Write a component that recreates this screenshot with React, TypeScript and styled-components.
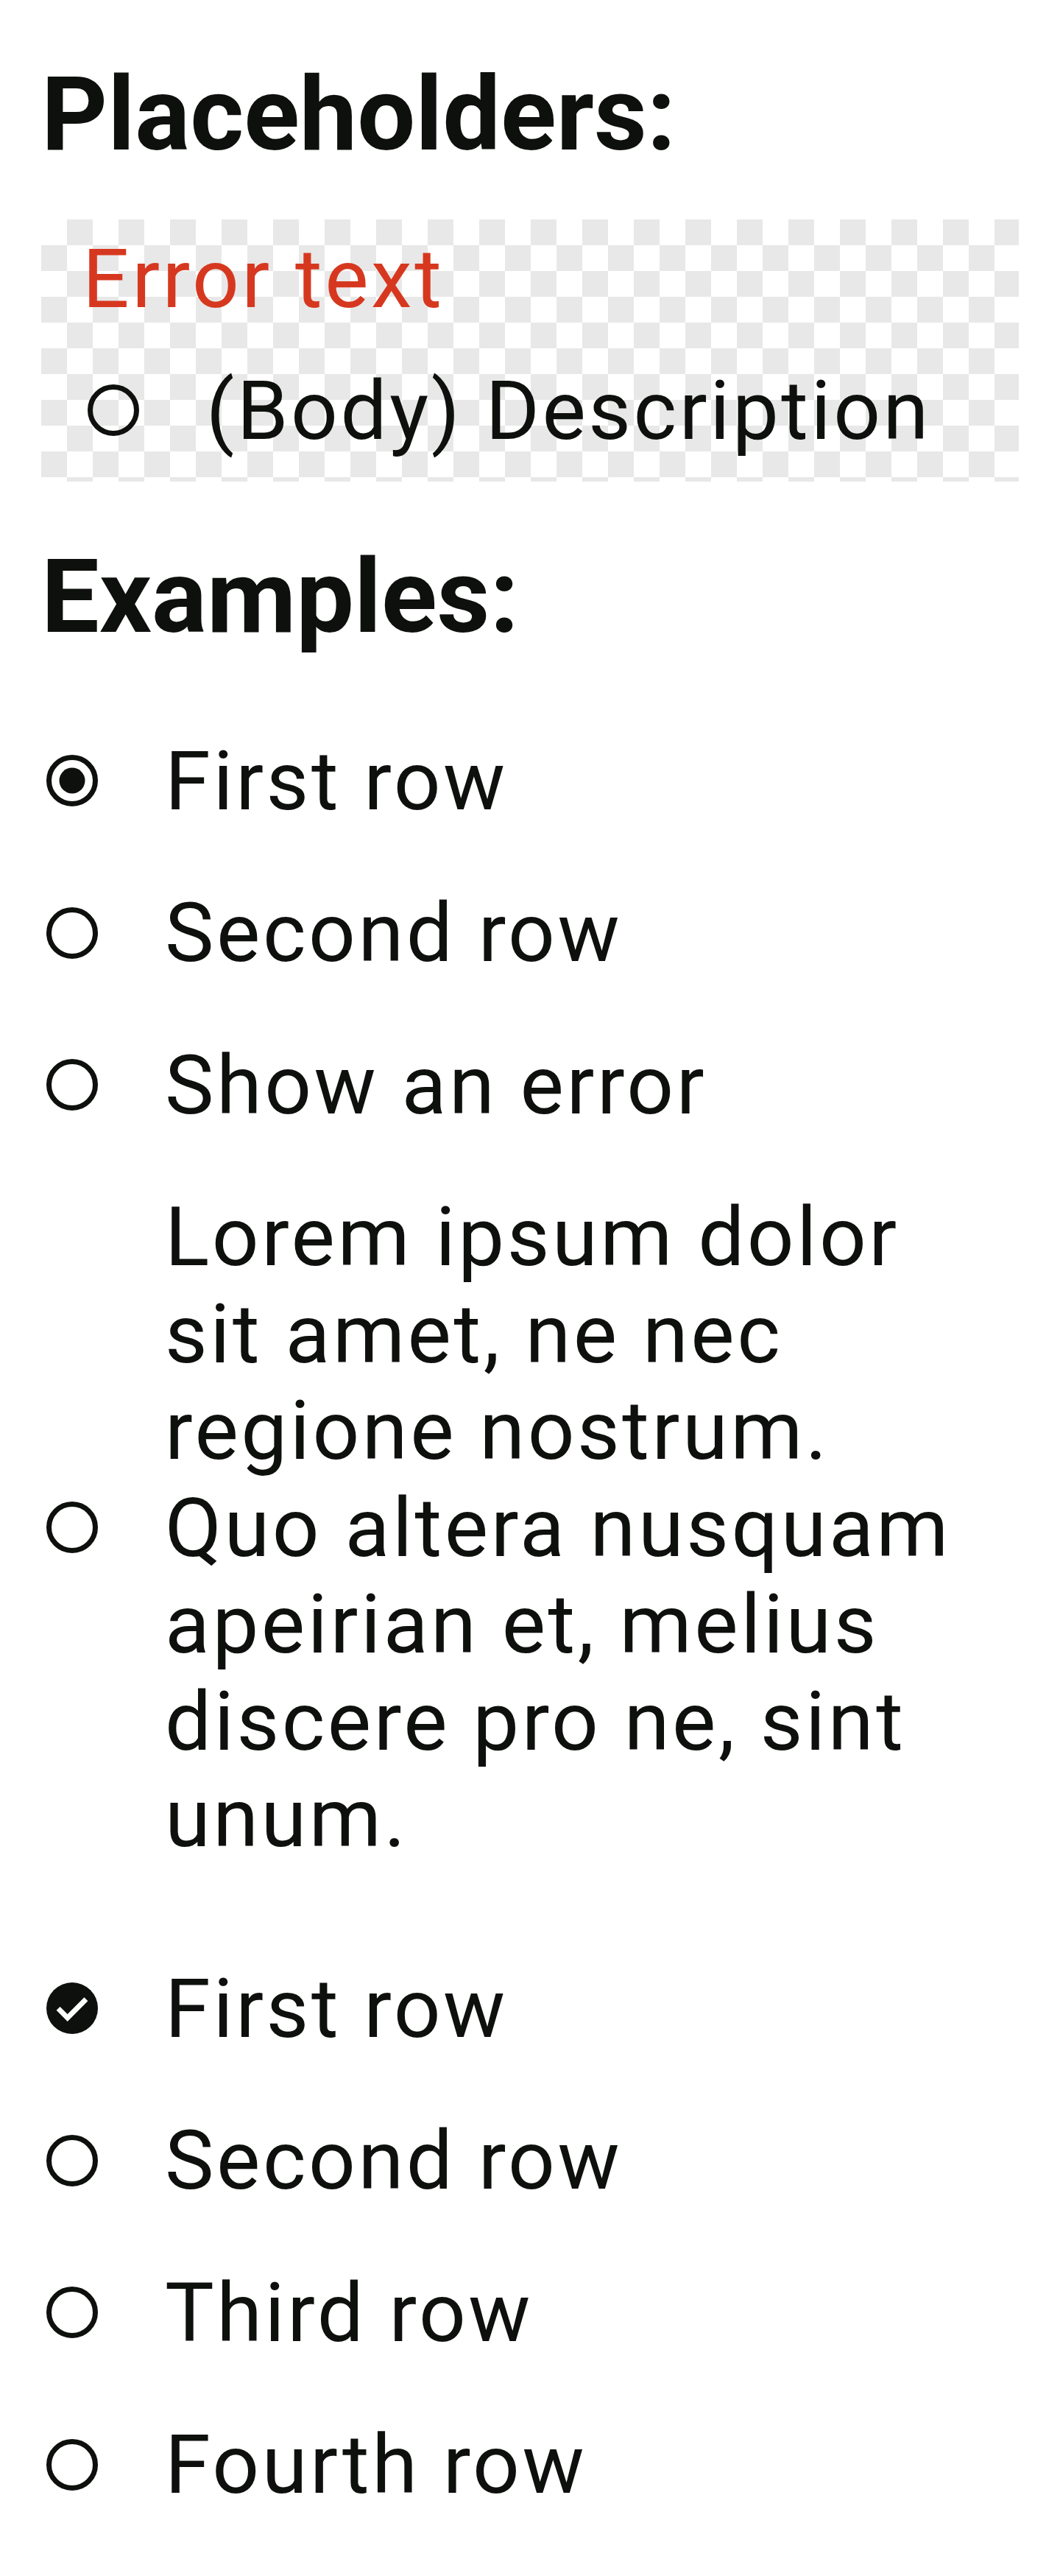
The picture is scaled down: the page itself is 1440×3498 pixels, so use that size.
import React from "react";
import styled, { createGlobalStyle } from "styled-components";

const GlobalStyle = createGlobalStyle`
  html, body {
    margin: 0;
    padding: 0;
    background: #ffffff;
  }
  body {
    font-family: Roboto, "Noto Sans", "Liberation Sans", sans-serif;
    color: #0e100d;
  }
`;

const Page = styled.main`
  padding: 73px 56px 48px;
`;

const Title = styled.h2<{ $after: number }>`
  margin: 0 0 ${(p) => p.$after}px;
  font-size: 140px;
  font-weight: 700;
  line-height: 164px;
`;

const PlaceholderBox = styled.section`
  margin-bottom: 74px;
  padding: 15px 56px 31px;
  background-color: #ffffff;
  background-image: conic-gradient(
    #e8e8e8 25%,
    transparent 0 50%,
    #e8e8e8 0 75%,
    transparent 0
  );
  background-size: 70px 70px;
`;

const ErrorText = styled.div`
  margin-bottom: 47px;
  color: #d6381f;
  font-size: 112px;
  line-height: 131.5px;
  letter-spacing: 3.5px;
`;

const Group = styled.div`
  display: flex;
  flex-direction: column;
  & + & {
    margin-top: 52px;
  }
`;

const Row = styled.div<{ $flush?: boolean }>`
  display: flex;
  align-items: center;
  gap: 84px;
  padding: ${(p) => (p.$flush ? "0" : "37.5px 0")};
`;

const IconSlot = styled.span`
  flex: none;
  width: 84px;
  height: 84px;
  svg {
    display: block;
    width: 84px;
    height: 84px;
  }
`;

const RowText = styled.div`
  max-width: 1100px;
  font-size: 112px;
  line-height: 131.5px;
  letter-spacing: 3.5px;
`;

const RadioIcon = ({ checked }: { checked?: boolean }) => (
  <svg viewBox="0 0 24 24">
    <circle cx="12" cy="12" r="9" fill="none" stroke="#0e100d" strokeWidth="2" />
    {checked && <circle cx="12" cy="12" r="5" fill="#0e100d" />}
  </svg>
);

const CheckCircleIcon = () => (
  <svg viewBox="0 0 24 24">
    <circle cx="12" cy="12" r="10" fill="#0e100d" />
    <polyline
      points="6.6,12.1 10.2,15.7 17.4,8.5"
      fill="none"
      stroke="#ffffff"
      strokeWidth="2"
    />
  </svg>
);

const lorem =
  "Lorem ipsum dolor sit amet, ne nec regione nostrum. Quo altera nusquam apeirian et, melius discere pro ne, sint unum.";

const radioRows = [
  { label: "First row", checked: true },
  { label: "Second row", checked: false },
  { label: "Show an error", checked: false },
  { label: lorem, checked: false },
];

const checkRows = [
  { label: "First row", checked: true },
  { label: "Second row", checked: false },
  { label: "Third row", checked: false },
  { label: "Fourth row", checked: false },
];

export default function App() {
  return (
    <>
      <GlobalStyle />
      <Page>
        <Title $after={61}>Placeholders:</Title>
        <PlaceholderBox>
          <ErrorText>Error text</ErrorText>
          <Row $flush>
            <IconSlot>
              <RadioIcon />
            </IconSlot>
            <RowText>(Body) Description</RowText>
          </Row>
        </PlaceholderBox>

        <Title $after={65}>Examples:</Title>
        <Group>
          {radioRows.map((r) => (
            <Row key={r.label}>
              <IconSlot>
                <RadioIcon checked={r.checked} />
              </IconSlot>
              <RowText>{r.label}</RowText>
            </Row>
          ))}
        </Group>
        <Group>
          {checkRows.map((r) => (
            <Row key={r.label}>
              <IconSlot>{r.checked ? <CheckCircleIcon /> : <RadioIcon />}</IconSlot>
              <RowText>{r.label}</RowText>
            </Row>
          ))}
        </Group>
      </Page>
    </>
  );
}
